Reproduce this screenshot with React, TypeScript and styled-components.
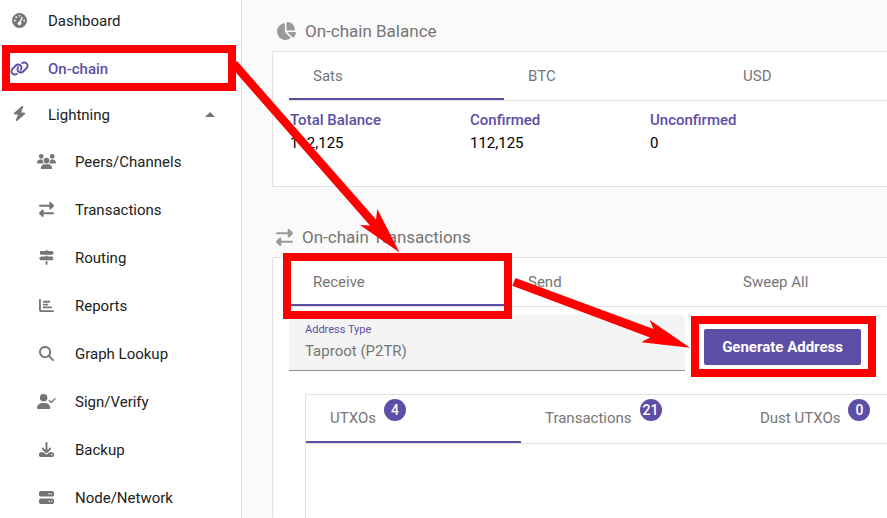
import React from "react";
import styled, { createGlobalStyle } from "styled-components";
import {
  FaBolt,
  FaChartBar,
  FaChartPie,
  FaDownload,
  FaGaugeHigh,
  FaLink,
  FaMagnifyingGlass,
  FaRightLeft,
  FaServer,
  FaSignsPost,
  FaUserCheck,
  FaUsers,
} from "react-icons/fa6";

const purple = "#5e4ea5";
const line = "#e0e0e0";
const muted = "#757575";

const GlobalStyle = createGlobalStyle`
  * { box-sizing: border-box; }
  body {
    margin: 0;
    overflow: hidden;
    background: #fafafa;
    font-family: Roboto, sans-serif;
    font-size: 15px;
    line-height: 20px;
    color: #212121;
  }
  button, select { font: inherit; }
`;

const Page = styled.div`
  position: relative;
  display: flex;
  height: 100vh;
  overflow: hidden;
`;

const Sidebar = styled.nav`
  flex: 0 0 242px;
  background: #fff;
  border-right: 1px solid ${line};
`;

const NavList = styled.ul`
  list-style: none;
  margin: -3px 0 0;
  padding: 0;
`;

const NavLink = styled.a<{ $active?: boolean; $nested?: boolean; $compact?: boolean }>`
  display: flex;
  align-items: center;
  height: ${(p) => (p.$compact ? 45 : 48)}px;
  padding: 0 26px ${(p) => (p.$compact ? 2 : 0)}px ${(p) => (p.$nested ? 36 : 9)}px;
  color: ${(p) => (p.$active ? purple : "#212121")};
  font-weight: ${(p) => (p.$active ? 500 : 400)};
  text-decoration: none;
`;

const NavIcon = styled.span<{ $active?: boolean; $wide?: boolean }>`
  display: flex;
  justify-content: center;
  width: 21px;
  margin-right: 18px;
  padding-bottom: 2px;
  color: ${(p) => (p.$active ? purple : muted)};
  svg {
    flex: none;
    width: ${(p) => (p.$wide ? 19 : 15)}px;
    height: ${(p) => (p.$wide ? 19 : 15)}px;
    margin: ${(p) => (p.$wide ? -2 : 0)}px 0;
  }
`;

const Caret = styled.span<{ $up?: boolean }>`
  width: 0;
  height: 0;
  margin-left: auto;
  border: 5px solid transparent;
  border-top-width: ${(p) => (p.$up ? 0 : 5)}px;
  border-bottom-width: ${(p) => (p.$up ? 5 : 0)}px;
  border-top-color: ${muted};
  border-bottom-color: ${muted};
`;

const Main = styled.main`
  flex: 1;
  min-width: 0;
  display: flex;
  flex-direction: column;
  padding: 21px 0 0 30px;
`;

const Heading = styled.h2<{ $icon: number }>`
  display: flex;
  align-items: center;
  gap: 9px;
  height: 20px;
  margin: 0 0 10px;
  padding-left: 4px;
  font-size: 17px;
  font-weight: 400;
  line-height: 20px;
  color: ${muted};
  svg {
    width: ${(p) => p.$icon}px;
    height: ${(p) => p.$icon}px;
    color: #9a9a9a;
  }
`;

const Card = styled.section<{ $grow?: boolean }>`
  flex: ${(p) => (p.$grow ? "1 0 auto" : "none")};
  display: flex;
  flex-direction: column;
  margin-bottom: ${(p) => (p.$grow ? 0 : 40)}px;
  padding-left: 16px;
  background: #fff;
  border: 1px solid ${line};
  border-right: 0;
  border-bottom-width: ${(p) => (p.$grow ? 0 : 1)}px;
  border-radius: 2px 0 0 2px;
`;

const TabBar = styled.div`
  display: flex;
  height: 49px;
  border-bottom: 1px solid ${line};
  overflow: hidden;
`;

const Tab = styled.button<{ $active?: boolean; $counted?: boolean }>`
  flex: 0 0 215px;
  padding: ${(p) => (p.$counted ? 0 : 2)}px 24px 0;
  border: 0;
  border-bottom: 2px solid ${(p) => (p.$active ? purple : "transparent")};
  background: none;
  color: ${muted};
  text-align: left;
`;

const TabLabel = styled.span`
  position: relative;
`;

const Badge = styled.span`
  position: absolute;
  left: calc(100% + 8px);
  bottom: 6px;
  width: 22px;
  height: 22px;
  border-radius: 50%;
  background: ${purple};
  color: #fff;
  font-size: 14px;
  font-weight: 500;
  line-height: 22px;
  text-align: center;
`;

const Balances = styled.dl`
  display: flex;
  margin: 0;
  padding: 8px 0 31px 1px;
`;

const Balance = styled.div`
  flex: 0 0 180px;
`;

const BalanceName = styled.dt`
  line-height: 22px;
  font-weight: 500;
  color: ${purple};
`;

const BalanceValue = styled.dd`
  margin: 0;
  line-height: 24px;
  color: #000;
`;

const AddressForm = styled.form`
  display: flex;
  align-items: flex-start;
  gap: 19px;
  padding: 8px 26px 23px 0;
`;

const SelectField = styled.div`
  flex: 1;
  display: flex;
  align-items: center;
  height: 56px;
  padding: 0 16px;
  background: #f4f4f4;
  border-bottom: 1px solid #8b8b8b;
  border-radius: 4px 4px 0 0;
`;

const FieldText = styled.div`
  flex: 1;
  display: flex;
  flex-direction: column;
  padding-bottom: 4px;
`;

const FieldLabel = styled.label`
  font-size: 11px;
  line-height: 20px;
  color: ${purple};
`;

const Select = styled.select`
  height: 22px;
  padding: 0;
  border: 0;
  appearance: none;
  background: none;
  color: ${muted};
`;

const GenerateButton = styled.button`
  height: 36px;
  margin-top: 14px;
  padding: 0 18px;
  border: 0;
  border-radius: 2px;
  background: ${purple};
  color: #fff;
  font-weight: 700;
  white-space: nowrap;
`;

const Outputs = styled.div`
  flex: 1;
  margin-left: 16px;
  border: 1px solid ${line};
  border-right: 0;
  border-bottom: 0;
  border-radius: 2px 0 0 0;
`;

const Annotations = styled.svg`
  position: absolute;
  top: 0;
  left: 0;
  pointer-events: none;
`;

const lightningPages = [
  { name: "Peers/Channels", Icon: FaUsers, wide: true },
  { name: "Transactions", Icon: FaRightLeft },
  { name: "Routing", Icon: FaSignsPost },
  { name: "Reports", Icon: FaChartBar },
  { name: "Graph Lookup", Icon: FaMagnifyingGlass },
  { name: "Sign/Verify", Icon: FaUserCheck, wide: true },
  { name: "Backup", Icon: FaDownload },
  { name: "Node/Network", Icon: FaServer },
];

const balances = [
  { name: "Total Balance", value: "112,125" },
  { name: "Confirmed", value: "112,125" },
  { name: "Unconfirmed", value: "0" },
];

type TabItem = { name: string; count?: number };

function Tabs({ items }: { items: TabItem[] }) {
  return (
    <TabBar role="tablist">
      {items.map((item, i) => (
        <Tab
          key={item.name}
          type="button"
          role="tab"
          aria-selected={i === 0}
          $active={i === 0}
          $counted={item.count !== undefined}
        >
          <TabLabel>
            {item.name}
            {item.count !== undefined && <Badge>{item.count}</Badge>}
          </TabLabel>
        </Tab>
      ))}
    </TabBar>
  );
}

export default function App() {
  return (
    <Page>
      <GlobalStyle />
      <Sidebar>
        <NavList>
          <li>
            <NavLink href="#dashboard">
              <NavIcon><FaGaugeHigh /></NavIcon>
              Dashboard
            </NavLink>
          </li>
          <li>
            <NavLink href="#onchain" $active>
              <NavIcon $active $wide><FaLink /></NavIcon>
              On-chain
            </NavLink>
          </li>
          <li>
            <NavLink href="#lightning" $compact>
              <NavIcon><FaBolt /></NavIcon>
              Lightning
              <Caret $up />
            </NavLink>
          </li>
          {lightningPages.map(({ name, Icon, wide }) => (
            <li key={name}>
              <NavLink href={`#${name}`} $nested>
                <NavIcon $wide={wide}><Icon /></NavIcon>
                {name}
              </NavLink>
            </li>
          ))}
        </NavList>
      </Sidebar>

      <Main>
        <Heading $icon={20}>
          <FaChartPie />
          On-chain Balance
        </Heading>
        <Card>
          <Tabs items={[{ name: "Sats" }, { name: "BTC" }, { name: "USD" }]} />
          <Balances>
            {balances.map((b) => (
              <Balance key={b.name}>
                <BalanceName>{b.name}</BalanceName>
                <BalanceValue>{b.value}</BalanceValue>
              </Balance>
            ))}
          </Balances>
        </Card>

        <Heading $icon={17}>
          <FaRightLeft />
          On-chain Transactions
        </Heading>
        <Card $grow>
          <Tabs items={[{ name: "Receive" }, { name: "Send" }, { name: "Sweep All" }]} />
          <AddressForm>
            <SelectField>
              <FieldText>
                <FieldLabel htmlFor="address-type">Address Type</FieldLabel>
                <Select id="address-type">
                  <option>Taproot (P2TR)</option>
                </Select>
              </FieldText>
              <Caret />
            </SelectField>
            <GenerateButton type="button">Generate Address</GenerateButton>
          </AddressForm>
          <Outputs>
            <Tabs
              items={[
                { name: "UTXOs", count: 4 },
                { name: "Transactions", count: 21 },
                { name: "Dust UTXOs", count: 0 },
              ]}
            />
          </Outputs>
        </Card>
      </Main>

      <Annotations width="887" height="518" viewBox="0 0 887 518" aria-hidden="true">
        <g fill="none" stroke="#ff0000" strokeWidth="8">
          <rect x="6" y="49" width="226" height="38" />
          <rect x="287" y="257" width="221" height="58" />
          <rect x="695" y="320" width="177" height="53" />
        </g>
        <g fill="#ff0000">
          <path d="M231 67 L237 61 L376 219.5 L377.3 209 L399.5 252.5 L360 225 L370 225.5 Z" />
          <path d="M512.3 285.7 L515.5 278 L653.5 329 L649.7 320 L690 347.7 L641.3 342.3 L650 337.5 Z" />
        </g>
      </Annotations>
    </Page>
  );
}
